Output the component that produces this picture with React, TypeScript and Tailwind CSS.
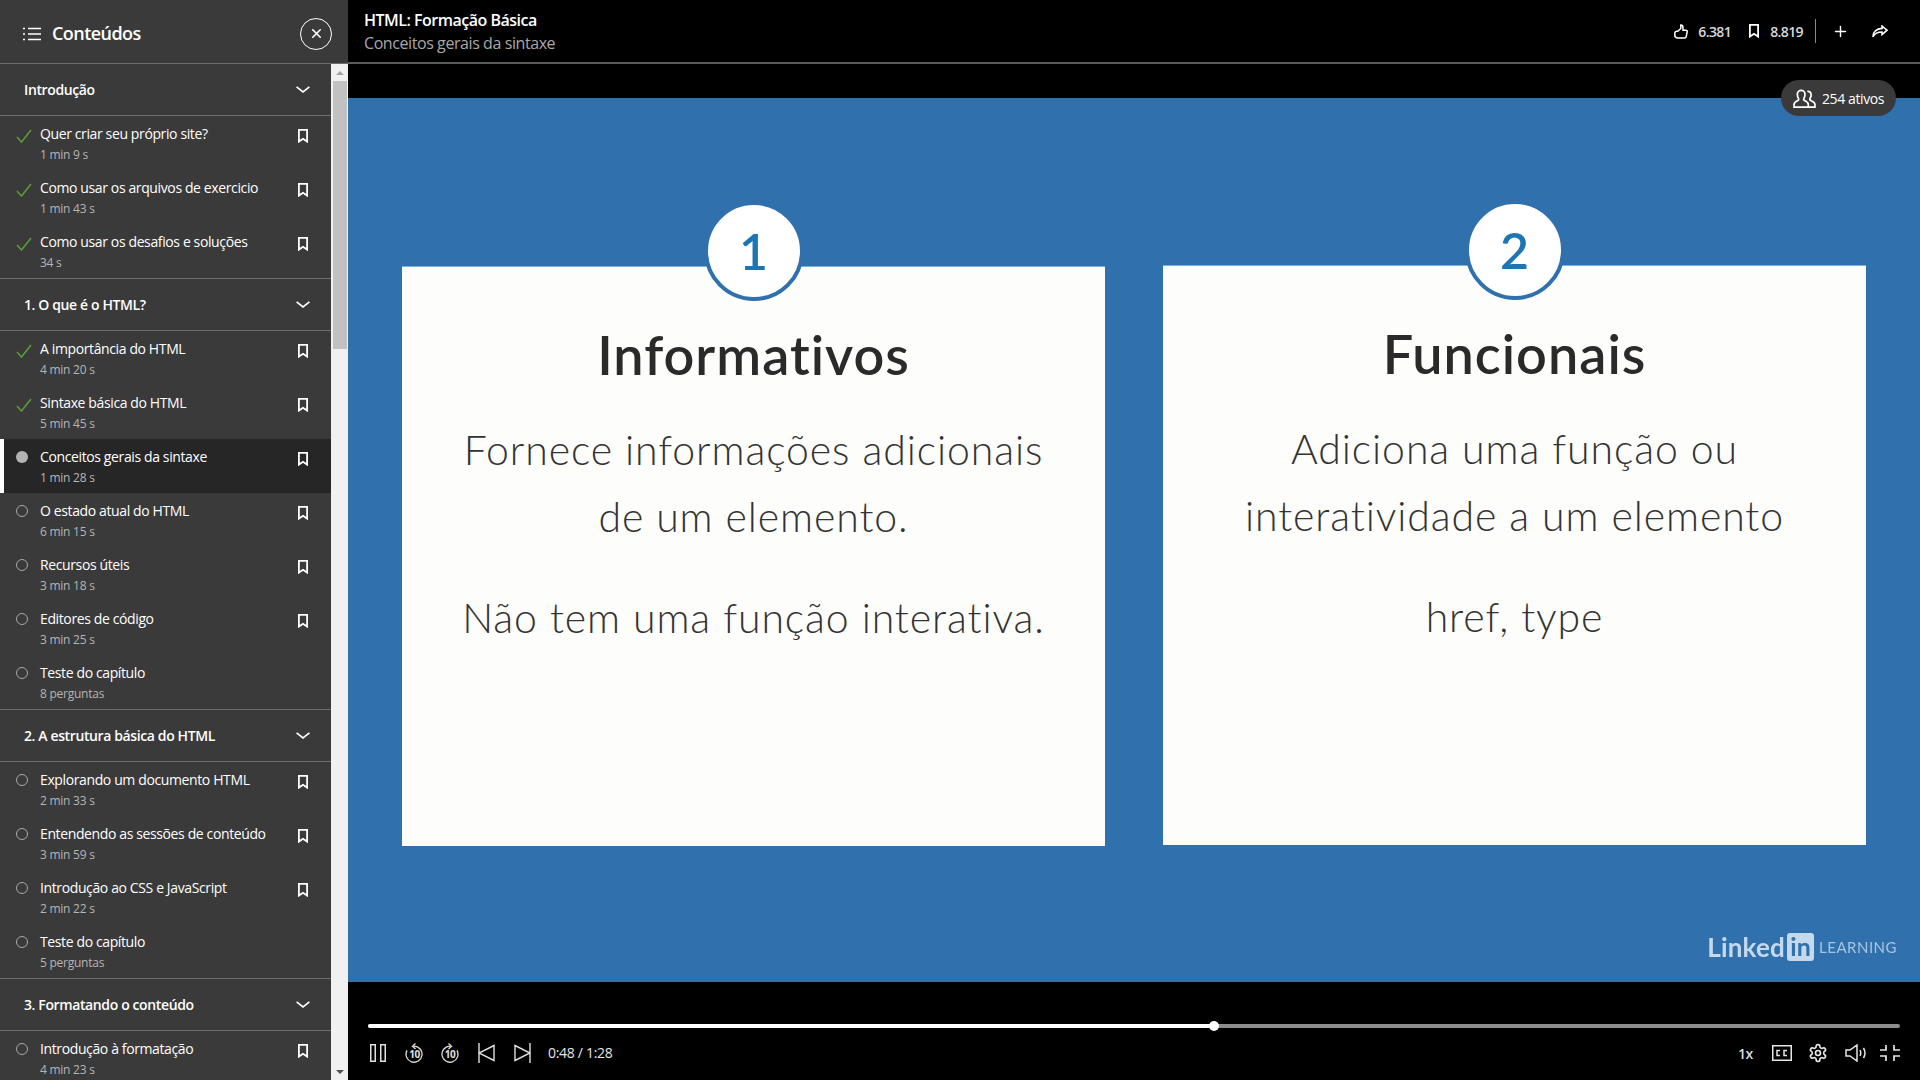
import React from 'react';
import { X, Plus } from 'lucide-react';

type Lesson = { title: string; sub: string; state: 'done' | 'current' | 'todo'; mark?: boolean };
type Section = { title: string; lessons: Lesson[] };

const sections: Section[] = [
  {
    title: 'Introdução',
    lessons: [
      { title: 'Quer criar seu próprio site?', sub: '1 min 9 s', state: 'done', mark: true },
      { title: 'Como usar os arquivos de exercicio', sub: '1 min 43 s', state: 'done', mark: true },
      { title: 'Como usar os desafios e soluções', sub: '34 s', state: 'done', mark: true },
    ],
  },
  {
    title: '1. O que é o HTML?',
    lessons: [
      { title: 'A importância do HTML', sub: '4 min 20 s', state: 'done', mark: true },
      { title: 'Sintaxe básica do HTML', sub: '5 min 45 s', state: 'done', mark: true },
      { title: 'Conceitos gerais da sintaxe', sub: '1 min 28 s', state: 'current', mark: true },
      { title: 'O estado atual do HTML', sub: '6 min 15 s', state: 'todo', mark: true },
      { title: 'Recursos úteis', sub: '3 min 18 s', state: 'todo', mark: true },
      { title: 'Editores de código', sub: '3 min 25 s', state: 'todo', mark: true },
      { title: 'Teste do capítulo', sub: '8 perguntas', state: 'todo' },
    ],
  },
  {
    title: '2. A estrutura básica do HTML',
    lessons: [
      { title: 'Explorando um documento HTML', sub: '2 min 33 s', state: 'todo', mark: true },
      { title: 'Entendendo as sessões de conteúdo', sub: '3 min 59 s', state: 'todo', mark: true },
      { title: 'Introdução ao CSS e JavaScript', sub: '2 min 22 s', state: 'todo', mark: true },
      { title: 'Teste do capítulo', sub: '5 perguntas', state: 'todo' },
    ],
  },
  {
    title: '3. Formatando o conteúdo',
    lessons: [{ title: 'Introdução à formatação', sub: '4 min 23 s', state: 'todo', mark: true }],
  },
];

const BookmarkIcon = ({ className = '' }: { className?: string }) => (
  <svg viewBox="0 0 10 14" className={className} fill="none" stroke="currentColor" strokeWidth="1.800">
    <path d="M.9.9h8.200v11.700L5 9.800.9 12.600z" />
  </svg>
);

const StateIcon = ({ state }: { state: Lesson['state'] }) => {
  if (state === 'done') {
    return (
      <svg viewBox="0 0 16 14" className="w-[16px] h-[14px] mt-[5px]" fill="none" stroke="#5b9a3c" strokeWidth="1.600">
        <path d="M1 8l4.500 5L15 1" />
      </svg>
    );
  }
  if (state === 'current') return <div className="w-[12px] h-[12px] mt-[4px] rounded-full bg-[#b3b3b3]" />;
  return <div className="w-[12px] h-[12px] mt-[4px] rounded-full border border-[#a8a8a8]" />;
};

const LessonRow = ({ lesson }: { lesson: Lesson }) => (
  <div
    className={`relative flex h-[54px] pl-[16px] pr-[23px] pt-[8px] shrink-0 ${
      lesson.state === 'current' ? 'bg-[#262626]' : ''
    }`}
  >
    {lesson.state === 'current' && <div className="absolute left-0 top-0 bottom-0 w-[4px] bg-white" />}
    <div className="w-[24px] shrink-0">
      <StateIcon state={lesson.state} />
    </div>
    <div className="flex-1 min-w-0">
      <div className="text-[14px] leading-[20px] text-white tracking-[-0.38px]">{lesson.title}</div>
      <div className="mt-px text-[12px] leading-[20px] text-[#b5b5b5] tracking-[-0.25px]">{lesson.sub}</div>
    </div>
    {lesson.mark && <BookmarkIcon className="w-[10px] h-[14px] mt-[5px] text-white shrink-0" />}
  </div>
);

const SectionBlock = ({ section }: { section: Section }) => (
  <>
    <div className="flex items-center justify-between h-[51px] shrink-0 pl-[24px] pr-[21px] border-b border-[#6e6e6e] box-content">
      <span className="text-[14px] font-semibold text-white tracking-[-0.38px]">{section.title}</span>
      <svg viewBox="0 0 14 7" className="w-[14px] h-[7px] text-white" fill="none" stroke="currentColor" strokeWidth="1.700">
        <path d="M.6.8L7 5.800 13.400.8" />
      </svg>
    </div>
    {section.lessons.map((l) => (
      <LessonRow key={l.title + l.sub} lesson={l} />
    ))}
    {section.lessons.length > 1 && <div className="h-px shrink-0 bg-[#6e6e6e]" />}
  </>
);

const Sidebar = () => (
  <div className="w-[348px] h-full shrink-0 flex flex-col bg-[#3a3a3a]">
    <div className="h-[64px] shrink-0 flex items-center pl-[23px] pr-[16px] pt-[4px] border-b border-[#6e6e6e]">
      <svg viewBox="0 0 18 14" className="w-[18px] h-[14px]" fill="none" stroke="white" strokeWidth="1.500">
        <path d="M5 1.500h13M5 7h13M5 12.500h13M0 1.500h2M0 7h2M0 12.500h2" />
      </svg>
      <span className="ml-[11px] text-[18px] font-semibold text-white tracking-[-0.55px] flex-1">Conteúdos</span>
      <div className="w-[32px] h-[32px] rounded-full border border-white flex items-center justify-center">
        <X className="w-[15px] h-[15px] text-white" strokeWidth={2.5} />
      </div>
    </div>
    <div className="flex-1 min-h-0 flex">
      <div className="w-[331px] flex flex-col overflow-hidden">
        {sections.map((s) => (
          <SectionBlock key={s.title} section={s} />
        ))}
      </div>
      <div className="w-[17px] bg-[#f1f1f1] flex flex-col items-center">
        <div className="h-[17px] flex items-center justify-center shrink-0">
          <div className="w-0 h-0 border-x-[4px] border-x-transparent border-b-[4px] border-b-[#a3a3a3]" />
        </div>
        <div className="w-[14px] h-[268px] bg-[#c1c1c1]" />
        <div className="flex-1" />
        <div className="h-[17px] flex items-center justify-center shrink-0">
          <div className="w-0 h-0 border-x-[4px] border-x-transparent border-t-[4px] border-t-[#505050]" />
        </div>
      </div>
    </div>
  </div>
);

const TopBar = () => (
  <div className="h-[64px] shrink-0 flex items-center pl-[16px] pr-[32px] border-b-2 border-[#5c5c5c] bg-black">
    <div className="flex-1 pt-px">
      <div className="text-[16px] leading-[23px] font-semibold text-white tracking-[-0.5px]">HTML: Formação Básica</div>
      <div className="text-[16px] leading-[23px] text-[#a8a8a8] tracking-[-0.42px]">Conceitos gerais da sintaxe</div>
    </div>
    <svg viewBox="0 0 14 15" className="w-[14px] h-[15px] text-white" fill="none" stroke="currentColor" strokeWidth="1.500">
      <path d="M.8 9.500c0-1.200.9-2.200 2-2.200h1l3-2.800V.9c1.500 0 2.200 1 2.200 2.600v2.800h3c.9 0 1.400.7 1.200 1.600l-1 4.700c-.2.8-.8 1.300-1.600 1.300H4c-1.800 0-3.200-1.300-3.200-3z" />
    </svg>
    <span className="ml-[10px] text-[14px] font-semibold text-[#d9d9d9] tracking-[-0.6px]">6.381</span>
    <BookmarkIcon className="ml-[18px] w-[10px] h-[14px] text-white" />
    <span className="ml-[11px] text-[14px] font-semibold text-[#d9d9d9] tracking-[-0.6px]">8.819</span>
    <div className="ml-[12px] w-px h-[24px] bg-[#8a8a8a]" />
    <Plus className="ml-[16px] w-[17px] h-[17px] text-white" strokeWidth={2} />
    <svg viewBox="0 0 16 12" className="ml-[23px] w-[16px] h-[12px] text-white" fill="none" stroke="currentColor" strokeWidth="1.600">
      <path d="M10 1l5 4.200-5 4.300V7C6 7 3 8 1 11.500 1 7 4.500 3.800 10 3.400z" />
    </svg>
  </div>
);

const SlideCard = ({ n, title, lines, extra }: { n: string; title: string; lines: string[]; extra: string }) => (
  <div
    className="relative w-[703px] h-[580px] bg-[#fdfdfc] border-t border-[#7ab4dc] flex flex-col items-center [font-variant-ligatures:none]"
    style={{ fontFamily: 'Lato, sans-serif' }}
  >
    <div className="absolute left-1/2 -translate-x-1/2 -top-[66px] w-[100px] h-[100px] rounded-full bg-white border-[4px] border-[#2f70ad] flex items-center justify-center text-[50px] font-semibold text-[#1d75b3]">
      {n}
    </div>
    <div className="mt-[53px] text-[54px] leading-[70px] font-semibold text-[#2a2a2a] tracking-[1px]">{title}</div>
    <div className="mt-[26px] text-[41px] leading-[67px] font-light text-[#333] text-center tracking-[0.9px]">
      {lines.map((l) => (
        <div key={l}>{l}</div>
      ))}
    </div>
    <div className="mt-[34px] text-[41px] leading-[67px] font-light text-[#333] tracking-[0.9px]">{extra}</div>
  </div>
);

const Slide = () => (
  <div className="relative h-[884px] shrink-0 bg-[#2f70ad] flex justify-center items-start gap-[58px] pt-[167px]">
    <div className="mt-px">
      <SlideCard
        n="1"
        title="Informativos"
        lines={['Fornece informações adicionais', 'de um elemento.']}
        extra="Não tem uma função interativa."
      />
    </div>
    <SlideCard
      n="2"
      title="Funcionais"
      lines={['Adiciona uma função ou', 'interatividade a um elemento']}
      extra="href, type"
    />
    <div className="absolute right-[23px] bottom-[21px] flex items-center blur-[0.4px]" style={{ fontFamily: 'Lato, sans-serif' }}>
      <span className="text-[26px] leading-[28px] font-bold text-[#c5d9ec] tracking-[0.2px]">Linked</span>
      <span className="ml-[2px] w-[27px] h-[28px] flex items-center justify-center rounded-[3px] bg-[#c5d9ec] text-[25px] font-bold text-[#2f70ad]">in</span>
      <span className="ml-[5px] text-[15px] text-[#a9c4de] tracking-[0.5px]">LEARNING</span>
    </div>
  </div>
);

const Controls = () => (
  <div className="flex-1 bg-black px-[20px] pt-[42px] text-white">
    <div className="relative h-[4px] rounded-full bg-[#8c8c8c]">
      <div className="h-full rounded-full bg-white w-[55.2%]" />
      <div className="absolute top-1/2 -translate-y-1/2 left-[55.2%] -ml-[5px] w-[10px] h-[10px] rounded-full bg-white" />
    </div>
    <div className="mt-[13px] flex items-center h-[24px] text-[#e0e0e0]">
      <svg viewBox="0 0 16 18" className="ml-[2px] w-[16px] h-[18px]" fill="none" stroke="currentColor" strokeWidth="1.500">
        <path d="M.75.75h4.500v16.500H.75zM10.750.75h4.500v16.500h-4.500z" />
      </svg>
      <svg viewBox="0 0 18 20" className="ml-[19px] w-[18px] h-[20px]" fill="none" stroke="currentColor" strokeWidth="1.300">
        <path d="M9 3.200a8 8 0 1 1-7 4.200M10.500.5L7.500 3.200l3 2.800" />
        <text x="9.500" y="15" textAnchor="middle" fontSize="10" fontWeight="700" letterSpacing="-0.5" fill="currentColor" stroke="none" fontFamily="Open Sans">10</text>
      </svg>
      <svg viewBox="0 0 18 20" className="ml-[18px] w-[18px] h-[20px]" fill="none" stroke="currentColor" strokeWidth="1.300">
        <path d="M9 3.200a8 8 0 1 0 7 4.200M7.500.5l3 2.700-3 2.800" />
        <text x="9" y="15" textAnchor="middle" fontSize="10" fontWeight="700" letterSpacing="-0.5" fill="currentColor" stroke="none" fontFamily="Open Sans">10</text>
      </svg>
      <svg viewBox="0 0 17 20" className="ml-[19px] w-[17px] h-[20px]" fill="none" stroke="currentColor" strokeWidth="1.400">
        <path d="M1 0v20M16 2.500v15L1 10z" />
      </svg>
      <svg viewBox="0 0 17 20" className="ml-[19px] w-[17px] h-[20px]" fill="none" stroke="currentColor" strokeWidth="1.400">
        <path d="M16 0v20M1 2.500v15L16 10z" />
      </svg>
      <span className="ml-[17px] -mt-px text-[14px] text-[#e6e6e6] tracking-[-0.3px]">0:48 / 1:28</span>
      <div className="flex-1" />
      <span className="text-[14px] font-semibold text-[#dcdcdc] tracking-[-0.3px]">1x</span>
      <svg viewBox="0 0 20 16" className="ml-[19px] w-[20px] h-[16px]" fill="none" stroke="#e6e6e6" strokeWidth="1.500">
        <path d="M.75.750h18.500v14.500H.75zM8 5.500H5v5h3M15 5.500h-3v5h3" />
      </svg>
      <svg viewBox="0 0 24 24" className="ml-[16px] w-[20px] h-[20px]" fill="none" stroke="#e6e6e6" strokeWidth="2">
        <circle cx="12" cy="12" r="3" />
        <path d="M12.220 2h-.44a2 2 0 0 0-2 2v.18a2 2 0 0 1-1 1.730l-.43.25a2 2 0 0 1-2 0l-.15-.08a2 2 0 0 0-2.730.73l-.22.38a2 2 0 0 0 .73 2.730l.15.1a2 2 0 0 1 1 1.720v.51a2 2 0 0 1-1 1.740l-.15.09a2 2 0 0 0-.73 2.730l.22.38a2 2 0 0 0 2.730.73l.15-.08a2 2 0 0 1 2 0l.43.25a2 2 0 0 1 1 1.730V20a2 2 0 0 0 2 2h.44a2 2 0 0 0 2-2v-.18a2 2 0 0 1 1-1.730l.43-.25a2 2 0 0 1 2 0l.15.08a2 2 0 0 0 2.730-.73l.22-.39a2 2 0 0 0-.73-2.730l-.15-.08a2 2 0 0 1-1-1.740v-.5a2 2 0 0 1 1-1.740l.15-.09a2 2 0 0 0 .73-2.730l-.22-.38a2 2 0 0 0-2.730-.73l-.15.08a2 2 0 0 1-2 0l-.43-.25a2 2 0 0 1-1-1.730V4a2 2 0 0 0-2-2z" />
      </svg>
      <svg viewBox="0 0 21 18" className="ml-[17px] w-[21px] h-[18px]" fill="none" stroke="#e6e6e6" strokeWidth="1.500">
        <path d="M1 6h4l7-5v16l-7-5H1zM15 6c1 2 1 4 0 6M18.500 4c1.800 3 1.800 7 0 10" />
      </svg>
      <svg viewBox="0 0 20 16" className="ml-[14px] w-[20px] h-[16px]" fill="none" stroke="#e6e6e6" strokeWidth="1.700">
        <path d="M0 5h6V0M14 0v5h6M0 11h6v5M14 16v-5h6" />
      </svg>
    </div>
  </div>
);

export default function App() {
  return (
    <div className="w-[1920px] h-[1080px] flex overflow-hidden bg-black" style={{ fontFamily: '"Open Sans", sans-serif' }}>
      <Sidebar />
      <div className="relative flex-1 min-w-0 flex flex-col">
        <TopBar />
        <div className="h-[34px] shrink-0" />
        <Slide />
        <Controls />
        <div className="absolute top-[80px] right-[24px] h-[36px] w-[115px] rounded-full bg-[#3a3a3a] flex items-center pl-[12px] text-white">
          <svg viewBox="0 0 24 20" className="w-[23px] h-[19px]" fill="none" stroke="currentColor" strokeWidth="1.800">
            <path d="M1 19v-3c0-2 2-3 4-4 1-.5 1-1.500.5-2.500C4.500 8 4.500 6.500 4.500 5.500c0-2.500 2-4 4-4s4 1.500 4 4c0 1 0 2.500-1 4-.5 1-.5 2 .5 2.500 2 1 4 2 4 4v3zM15 2.500c2-.5 4 1 4 3.500 0 1 0 2.200-1 3.500-.5 1-.5 2 .5 2.500 2 1 4.500 2 4.500 4v3h-7" />
          </svg>
          <span className="ml-[6px] text-[14px] tracking-[-0.4px]">254 ativos</span>
        </div>
      </div>
    </div>
  );
}
